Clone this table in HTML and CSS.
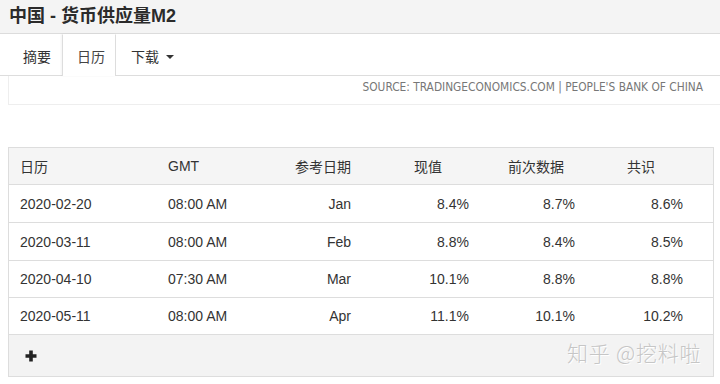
FILE: index.html
```html
<!DOCTYPE html>
<html lang="zh">
<head>
<meta charset="utf-8">
<title>中国 - 货币供应量M2</title>
<link rel="stylesheet" href="styles.css">
</head>
<body>
<header class="titlebar">中国 - 货币供应量M2</header>
<nav class="tabs">
  <a class="tab">摘要</a>
  <a class="tab active">日历</a>
  <a class="tab">下载<span class="caret"></span></a>
</nav>
<div class="source">SOURCE: TRADINGECONOMICS.COM | PEOPLE'S BANK OF CHINA</div>
<div class="tablewrap">
  <table class="cal">
    <colgroup>
      <col class="w1"><col class="w2"><col class="w3"><col class="w4"><col class="w5"><col class="w6">
    </colgroup>
    <thead>
      <tr>
        <th class="c1">日历</th>
        <th class="c2">GMT</th>
        <th class="c3">参考日期</th>
        <th class="c4">现值</th>
        <th class="c5">前次数据</th>
        <th class="c6">共识</th>
      </tr>
    </thead>
    <tbody>
      <tr class="r38">
        <td class="c1">2020-02-20</td><td class="c2">08:00 AM</td><td class="c3">Jan</td>
        <td class="c4">8.4%</td><td class="c5">8.7%</td><td class="c6">8.6%</td>
      </tr>
      <tr class="r38">
        <td class="c1">2020-03-11</td><td class="c2">08:00 AM</td><td class="c3">Feb</td>
        <td class="c4">8.8%</td><td class="c5">8.4%</td><td class="c6">8.5%</td>
      </tr>
      <tr class="r37">
        <td class="c1">2020-04-10</td><td class="c2">07:30 AM</td><td class="c3">Mar</td>
        <td class="c4">10.1%</td><td class="c5">8.8%</td><td class="c6">8.8%</td>
      </tr>
      <tr class="r37">
        <td class="c1">2020-05-11</td><td class="c2">08:00 AM</td><td class="c3">Apr</td>
        <td class="c4">11.1%</td><td class="c5">10.1%</td><td class="c6">10.2%</td>
      </tr>
    </tbody>
    <tfoot>
      <tr>
        <td colspan="6" class="foot">
          <svg class="plus" width="12" height="12" viewBox="0 0 12 12" aria-hidden="true">
            <path d="M6 0.5V11.5M0.5 6H11.5" stroke="#222" stroke-width="3.6" fill="none"/>
          </svg>
        </td>
      </tr>
    </tfoot>
  </table>
  <div class="watermark">知乎 @挖料啦</div>
</div>
</body>
</html>
```

FILE: styles.css
```css
html, body {
  margin: 0;
  padding: 0;
  background: #fff;
}
body {
  width: 720px;
  height: 384px;
  overflow: hidden;
  font-family: "Liberation Sans", "Noto Sans CJK SC", sans-serif;
  color: #333;
}
.titlebar {
  height: 33px;
  line-height: 32px;
  padding-left: 9px;
  background: #f4f4f4;
  border-bottom: 1px solid #dcdcdc;
  font-size: 18px;
  font-weight: bold;
  color: #2b2b2b;
}
.tabs {
  display: flex;
  height: 41px;
  padding-left: 8px;
  border-bottom: 1px solid #ddd;
}
.tab {
  display: flex;
  align-items: center;
  padding: 0 10px 0 14px;
  border: 1px solid transparent;
  border-bottom: none;
  font-size: 14px;
  color: #333;
  height: 42px;
  box-sizing: border-box;
}
.tab.active {
  border-left-color: #ddd;
  border-right-color: #ddd;
  background: #fff;
  color: #444;
  box-shadow: -1px 0 2px rgba(0,0,0,0.05);
}
.caret {
  display: inline-block;
  width: 0;
  height: 0;
  margin-left: 7px;
  margin-top: 2px;
  border-top: 4px solid #333;
  border-left: 4px solid transparent;
  border-right: 4px solid transparent;
}
.source {
  margin-left: 8px;
  height: 29px;
  box-sizing: border-box;
  padding: 3px 17px 0 0;
  border-left: 1px solid #eee;
  border-bottom: 1px solid #eee;
  text-align: right;
  font-size: 11.8px;
  line-height: 16px;
  color: #777;
  font-family: "DejaVu Sans Condensed", "Liberation Sans Narrow", "Liberation Sans", sans-serif;
}
.tablewrap {
  position: relative;
  margin: 42px 0 0 8px;
  width: 706px;
}
.cal {
  width: 706px;
  table-layout: fixed;
  border-collapse: separate;
  border-spacing: 0;
  border: 1px solid #ddd;
  font-size: 14px;
  color: #333;
}
.w1 { width: 148px; }
.w2 { width: 103px; }
.w3 { width: 102px; }
.w4 { width: 118px; }
.w5 { width: 106px; }
.w6 { width: 127px; }
.cal th, .cal td {
  padding: 0;
  white-space: nowrap;
}
.cal th {
  height: 36px;
  background: #f5f5f5;
  font-weight: normal;
  text-align: left;
}
.cal td {
  border-top: 1px solid #ddd;
}
.r38 td { height: 37px; }
.r37 td { height: 36px; }
.c1, .c2 { padding-left: 11px !important; text-align: left; }
.c3 { padding-right: 11px !important; text-align: right !important; }
td.c4, td.c5 { text-align: right; padding-right: 11px !important; }
td.c6 { text-align: right; padding-right: 30px !important; }
th.c4 { padding-left: 52px !important; }
th.c5 { padding-left: 28px !important; }
th.c6 { padding-left: 41px !important; }
.cal td.foot {
  height: 41px;
  background: #f3f3f3;
  padding-left: 16px !important;
  vertical-align: middle;
}
.plus {
  display: block;
  margin-top: 1px;
}
.watermark {
  position: absolute;
  left: 559px;
  top: 190px;
  font-family: "Noto Sans CJK SC", sans-serif;
  font-size: 21px;
  font-weight: 300;
  color: #c6c6c6;
  letter-spacing: 0.8px;
  text-shadow: 1px 1px 0 #fff;
}
```
